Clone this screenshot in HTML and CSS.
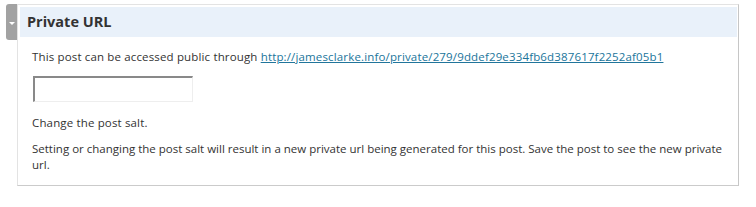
FILE: index.html
```html
<!DOCTYPE html>
<html lang="en">
<head>
    <meta charset="UTF-8">
    <title>Private URL</title>
    <link rel="stylesheet" href="styles.css">
</head>
<body>

<div class="postbox">
    <div class="handle"><span class="arrow"></span></div>
    <h3 class="postbox-title">Private URL</h3>
    <div class="inside">
        <p class="first">This post can be accessed public through <a href="#">http://jamesclarke.info/private/279/9ddef29e334fb6d387617f2252af05b1</a></p>
        <input type="text" class="salt">
        <p class="salt-label">Change the post salt.</p>
        <p class="note">Setting or changing the post salt will result in a new private url being generated for this post. Save the post to see the new private url.</p>
    </div>
</div>

</body>
</html>
```

FILE: styles.css
```css
body {
    margin: 0;
    padding: 4px 0 0 17px;
    background: white;
    font-family: "Open Sans", "Noto Sans", Arial, sans-serif;
    font-size: 11.5px;
    letter-spacing: 0.15px;
    line-height: 16px;
    color: #333;
}
.postbox {
    position: relative;
    width: 720px;
    border: 1px solid #e3e3e3;
    border-right-color: #c6c6c6;
    border-bottom-color: #cbcbcb;
}
/* grey toggle tab on the left */
.handle {
    position: absolute;
    left: -12px;
    top: -1px;
    width: 11px;
    height: 36px;
    background-color: #a2a2a2;
    border-radius: 3px 0 0 3px;
}
.handle .arrow {
    position: absolute;
    left: 3px;
    top: 18px;
    width: 0;
    height: 0;
    border-left: 3px solid transparent;
    border-right: 3px solid transparent;
    border-top: 3px solid white;
}
.postbox-title {
    margin: 2px 1px 0 2px;
    height: 30px;
    padding: 0 7px;
    background-color: #e9f1fa;
    font-size: 14.5px;
    font-weight: bold;
    letter-spacing: 0;
    line-height: 30px;
    color: #333;
}
.inside {
    padding: 12px 14px 12px 14px;
}
.inside p {
    margin: 0;
}
.inside a {
    color: #21759b;
}
.salt {
    display: block;
    box-sizing: border-box;
    width: 160px;
    height: 26px;
    margin: 11px 0 13px 1px;
    border-style: solid;
    border-width: 2px 1px 1px 2px;
    border-color: #898989 #eeeeee #eeeeee #898989;
    background: white;
}
.salt-label {
    margin-bottom: 10px !important;
}
.note {
    letter-spacing: 0;
}
```
